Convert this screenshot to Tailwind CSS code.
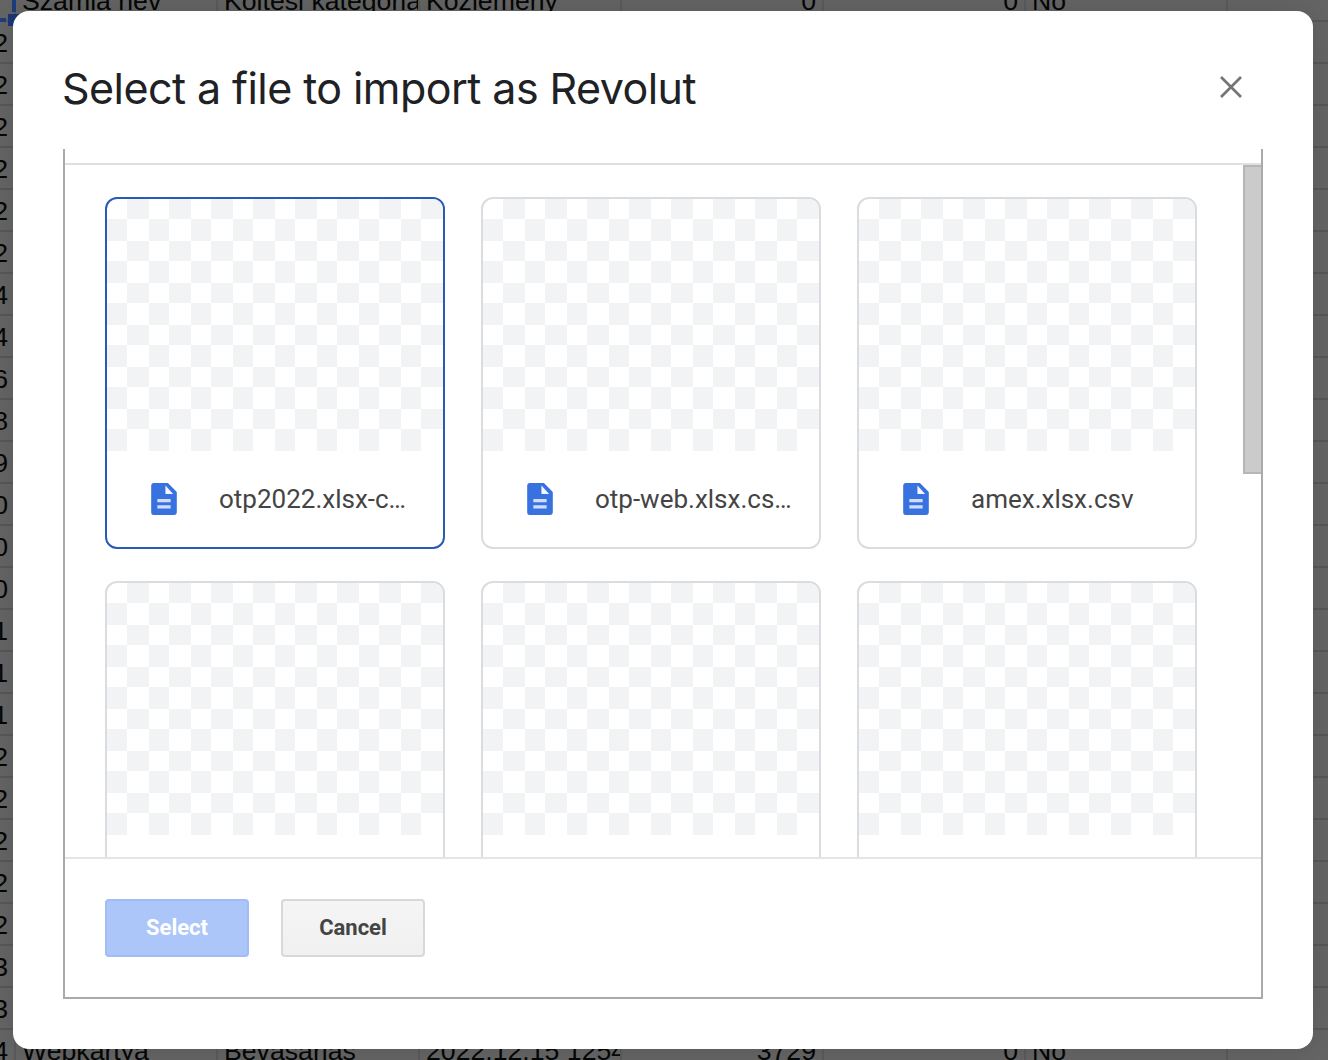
<!DOCTYPE html>
<html lang="en">
<head>
<meta charset="utf-8">
<title>Select a file</title>
<script src="https://cdn.jsdelivr.net/npm/@tailwindcss/browser@4"></script>
</head>
<body class="relative h-[1060px] w-[1328px] overflow-hidden bg-[#646564]">
  <svg class="absolute size-0" aria-hidden="true">
    <defs>
      <pattern id="checker" width="42" height="42" patternUnits="userSpaceOnUse">
        <rect x="20" y="0" width="22" height="20" fill="#f1f3f4"/>
        <rect x="0" y="20" width="20" height="22" fill="#f1f3f4"/>
      </pattern>
      <symbol id="doc" viewBox="0 0 27 32">
        <path d="M2.7 0H17.6L26.8 9V29a3 3 0 0 1-3 3H2.7a2.5 2.5 0 0 1-2.5-2.5V2.5A2.5 2.5 0 0 1 2.7 0z" fill="#3871e0"/>
        <path d="M15 2.6V11H23z" fill="#f4f8ff"/>
        <path d="M6.6 17.6H20.4M6.6 23.8H20.4" stroke="#cfddf9" stroke-width="3.2"/>
      </symbol>
    </defs>
  </svg>

  <!-- Dimmed spreadsheet -->
  <div id="sheet" class="-mt-5 flex h-[1092px] w-[1328px] flex-col overflow-hidden font-['Liberation_Sans',sans-serif] text-[26.67px] leading-[42px] text-[#050606]"></div>

  <!-- Selection outline and fill handle of the active cell -->
  <div class="absolute left-3 top-0 h-3 w-1 bg-[#1f3c7c]"></div>
  <div class="absolute left-0 top-[18px] h-1 w-1.5 bg-[#1f3c7c]"></div>
  <div class="absolute left-2 top-3.5 size-3 bg-[#1a3776]"></div>

  <!-- Dialog -->
  <div class="absolute left-[13px] top-[11px] flex h-[1038px] w-[1300px] flex-col rounded-2xl bg-white px-[50px] pb-[50px] shadow-[0_0_30px_rgba(0,0,0,0.13)]">
    <header class="flex h-[138px] shrink-0 items-center justify-between pr-5">
      <h1 class="-ml-px mt-[17px] whitespace-nowrap font-['Inter',sans-serif] text-[43px] tracking-[-0.56px] text-[#202124]">Select a file to import as Revolut</h1>
      <svg class="mt-[14px] size-6" viewBox="0 0 24 24" fill="none" stroke="#757575" stroke-width="2.7"><path d="M2 2L22 22M22 2L2 22"/></svg>
    </header>
    <div class="flex min-h-0 grow flex-col border-x-2 border-b-2 border-[#aaaaaa]">
      <div class="h-4 shrink-0 border-b-2 border-[#e0e0e0]"></div>
      <div class="flex h-[692px] shrink-0 justify-between overflow-hidden pl-10">
        <div id="cards" class="grid h-[736px] shrink-0 grid-cols-[340px_340px_340px] grid-rows-[352px_352px] gap-x-9 gap-y-8 pt-8"></div>
        <div class="h-[309px] w-[18px] border-y-2 border-l-2 border-[#b6b6b6] bg-[#cbcbcb]"></div>
      </div>
      <footer class="flex grow gap-8 border-t-2 border-[#e5e5e5] pl-10 pt-10 font-['Roboto',sans-serif] text-[22px] font-bold">
        <button class="h-[58px] w-36 rounded border-2 border-[#a2bcf5] bg-[#adc6fa] pb-0.5 text-white">Select</button>
        <button class="h-[58px] w-36 rounded border-2 border-[#d8d8d8] bg-linear-to-b from-[#f5f5f5] to-[#f0f0f0] pb-0.5 text-[#444444]">Cancel</button>
      </footer>
    </div>
  </div>

<script>
  const ids = ['', '2','2','2','2','2','2','4','4','6','8','9','0','0','0','1','1','1','2','2','2','2','2','3','3','4'];
  const header = ['Számla név', 'Költési kategória', 'Közlemény', '0', '0', 'No'];
  const last = ['Webkártya', 'Bevásárlás', '2022.12.15 1254', '3729', '0', 'No'];
  document.getElementById('sheet').innerHTML = ids.map((id, r) => {
    const vals = r === 0 ? header : r === ids.length - 1 ? last : ['', '', '', '', '', ''];
    const cells = vals.map((v, c) =>
      `<div class="w-[202px] shrink-0 overflow-hidden whitespace-nowrap border-r-2 border-[#5a5b5a] ${c === 3 || c === 4 ? 'pr-1.5 text-right' : 'pl-1.5'}">${v}</div>`).join('');
    return `<div class="flex h-[42px] shrink-0 border-b-2 border-[#575857]"><div class="flex w-4 shrink-0 justify-end border-r-2 border-[#5a5b5a] pr-1.5">${id}</div>${cells}</div>`;
  }).join('');

  const files = ['otp2022.xlsx-c…', 'otp-web.xlsx.cs…', 'amex.xlsx.csv', '', '', ''];
  document.getElementById('cards').innerHTML = files.map((name, i) => `
    <div class="overflow-hidden rounded-xl border-2 ${i === 0 ? 'border-[#2a5ab8]' : 'border-[#dadce0]'}">
      <svg class="block h-[252px] w-[336px]"><rect width="336" height="252" fill="url(#checker)"/></svg>
      <div class="flex h-24 items-center pl-11">
        ${name ? '<svg class="h-8 w-[26px]" viewBox="0 0 27 32" preserveAspectRatio="none"><use href="#doc" width="27" height="32"/></svg>' : ''}
        <span class="ml-[42px] whitespace-nowrap font-['Roboto',sans-serif] text-[26px] text-[#444444]">${name}</span>
      </div>
    </div>`).join('');
</script>
</body>
</html>
